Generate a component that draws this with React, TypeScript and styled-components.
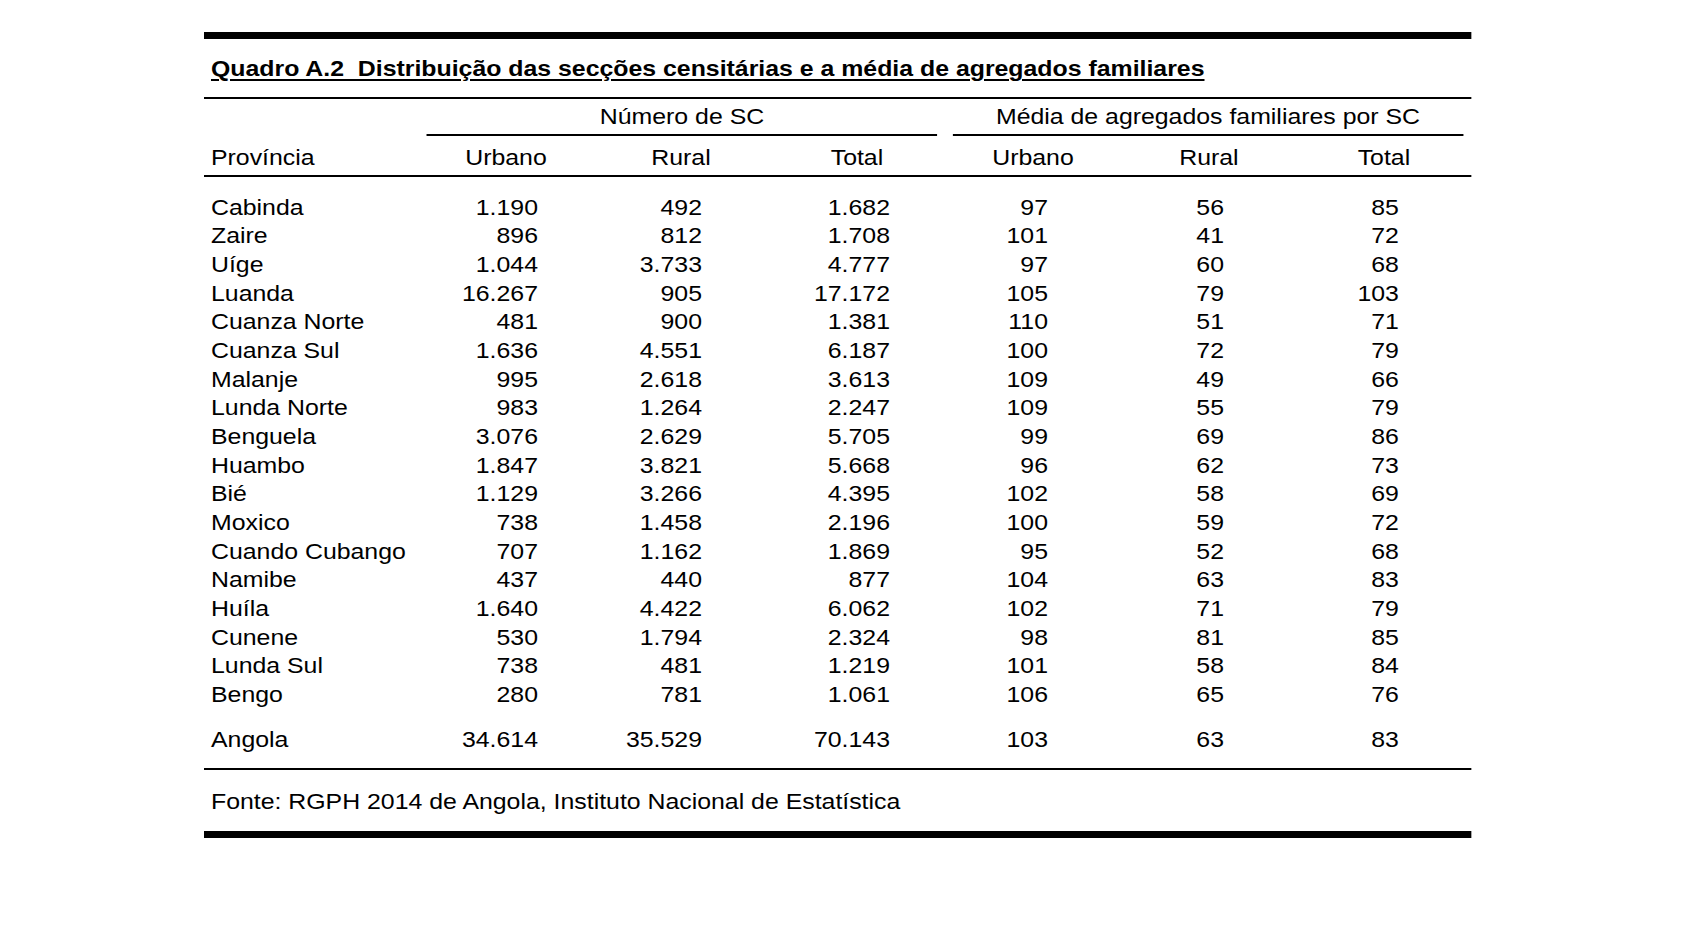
import React from "react";
import styled, { createGlobalStyle } from "styled-components";

const FS = 22;
const S = 24.85 / FS;
const sx = (v: number) => `${(v / S).toFixed(3)}px`;
const COLS = [223, 158, 192, 176, 160, 192, 166];
const TEMPLATE = COLS.map((c) => sx(c)).join(" ");

const GlobalStyle = createGlobalStyle`
  html, body { margin: 0; padding: 0; background: #ffffff; }
  body {
    font-family: "Liberation Sans", Arial, Helvetica, sans-serif;
    color: #000000;
  }
`;

const Page = styled.div`
  width: 1698px;
  height: 950px;
  box-sizing: border-box;
  padding: 32px 0 0 204px;
  background: #ffffff;
  overflow: hidden;
`;

const Sheet = styled.div`
  width: ${sx(1267)};
  transform: scaleX(${S});
  transform-origin: 0 0;
  font-size: ${FS}px;
  line-height: 28.67px;
`;

const ThickRule = styled.div<{ $mt?: number }>`
  height: 7px;
  background: #000000;
  margin-top: ${(p) => p.$mt ?? 0}px;
`;

const ThinRule = styled.div<{ $mt: number }>`
  height: 2px;
  background: #000000;
  margin-top: ${(p) => p.$mt}px;
`;

const Title = styled.h1`
  margin: 17px 0 0 0;
  padding-left: ${sx(7)};
  font-size: ${FS}px;
  line-height: 26px;
  font-weight: 700;
  white-space: pre;
  text-decoration: underline;
  text-decoration-thickness: 2px;
  text-underline-offset: 3px;
`;

const GridRow = styled.div<{ $mt?: number; $ruled?: boolean }>`
  display: grid;
  grid-template-columns: ${TEMPLATE};
  margin-top: ${(p) => p.$mt ?? 0}px;
  border-bottom: ${(p) => (p.$ruled ? "2px solid #000000" : "none")};
`;

const GroupLabel = styled.div<{ $start: number; $mr: number }>`
  grid-column: ${(p) => p.$start} / span 3;
  margin-right: ${(p) => sx(p.$mr)};
  text-align: center;
  padding-bottom: 2.5px;
  border-bottom: 2px solid #000000;
  white-space: nowrap;
`;

const Cell = styled.div<{ $align: "left" | "center" | "right"; $pl?: number; $pr?: number; $pb?: number }>`
  text-align: ${(p) => p.$align};
  padding-left: ${(p) => sx(p.$pl ?? 0)};
  padding-right: ${(p) => sx(p.$pr ?? 0)};
  padding-bottom: ${(p) => p.$pb ?? 0}px;
  white-space: nowrap;
`;

const Body = styled.div`
  margin-top: 16.5px;
`;

const Source = styled.p`
  margin: 17.7px 0 0 0;
  padding-left: ${sx(7)};
  line-height: 28.67px;
`;

type Row = [string, string, string, string, string, string, string];

const ROWS: Row[] = [
  ["Cabinda", "1.190", "492", "1.682", "97", "56", "85"],
  ["Zaire", "896", "812", "1.708", "101", "41", "72"],
  ["Uíge", "1.044", "3.733", "4.777", "97", "60", "68"],
  ["Luanda", "16.267", "905", "17.172", "105", "79", "103"],
  ["Cuanza Norte", "481", "900", "1.381", "110", "51", "71"],
  ["Cuanza Sul", "1.636", "4.551", "6.187", "100", "72", "79"],
  ["Malanje", "995", "2.618", "3.613", "109", "49", "66"],
  ["Lunda Norte", "983", "1.264", "2.247", "109", "55", "79"],
  ["Benguela", "3.076", "2.629", "5.705", "99", "69", "86"],
  ["Huambo", "1.847", "3.821", "5.668", "96", "62", "73"],
  ["Bié", "1.129", "3.266", "4.395", "102", "58", "69"],
  ["Moxico", "738", "1.458", "2.196", "100", "59", "72"],
  ["Cuando Cubango", "707", "1.162", "1.869", "95", "52", "68"],
  ["Namibe", "437", "440", "877", "104", "63", "83"],
  ["Huíla", "1.640", "4.422", "6.062", "102", "71", "79"],
  ["Cunene", "530", "1.794", "2.324", "98", "81", "85"],
  ["Lunda Sul", "738", "481", "1.219", "101", "58", "84"],
  ["Bengo", "280", "781", "1.061", "106", "65", "76"],
];

const TOTAL: Row = ["Angola", "34.614", "35.529", "70.143", "103", "63", "83"];

// right padding (real px) of the numbers in each numeric column
const NUM_PAD = [47, 75, 63, 65, 81, 72];
// right padding (real px) of the centred column headings
const HEAD_PAD = [0, 0, 16, 0, 0, 8];
const HEADS = ["Urbano", "Rural", "Total", "Urbano", "Rural", "Total"];

const DataRow: React.FC<{ row: Row; mt?: number }> = ({ row, mt }) => (
  <GridRow $mt={mt}>
    <Cell $align="left" $pl={7}>
      {row[0]}
    </Cell>
    {row.slice(1).map((v, i) => (
      <Cell key={i} $align="right" $pr={NUM_PAD[i]}>
        {v}
      </Cell>
    ))}
  </GridRow>
);

export default function App() {
  return (
    <>
      <GlobalStyle />
      <Page>
        <Sheet>
          <ThickRule />
          <Title>{"Quadro A.2  Distribuição das secções censitárias e a média de agregados familiares"}</Title>
          <ThinRule $mt={15} />
          <GridRow $mt={4}>
            <GroupLabel $start={2} $mr={16}>Número de SC</GroupLabel>
            <GroupLabel $start={5} $mr={8}>Média de agregados familiares por SC</GroupLabel>
          </GridRow>
          <GridRow $mt={7.5} $ruled>
            <Cell $align="left" $pl={7} $pb={2.67}>
              Província
            </Cell>
            {HEADS.map((h, i) => (
              <Cell key={i} $align="center" $pr={HEAD_PAD[i]} $pb={2.67}>
                {h}
              </Cell>
            ))}
          </GridRow>
          <Body>
            {ROWS.map((r) => (
              <DataRow key={r[0]} row={r} />
            ))}
          </Body>
          <DataRow row={TOTAL} mt={16.2} />
          <ThinRule $mt={13.6} />
          <Source>Fonte: RGPH 2014 de Angola, Instituto Nacional de Estatística</Source>
          <ThickRule $mt={14.6} />
        </Sheet>
      </Page>
    </>
  );
}
